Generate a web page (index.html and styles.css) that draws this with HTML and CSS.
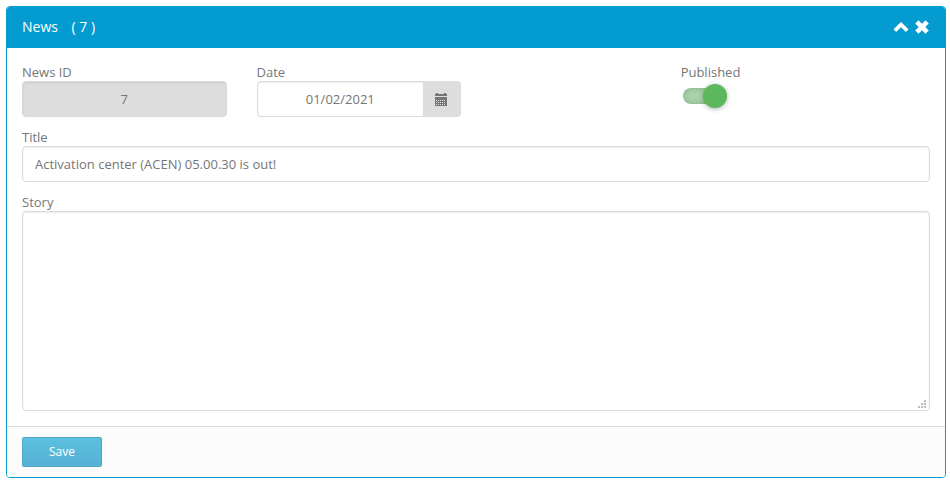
FILE: index.html
```html
<!DOCTYPE html>
<html lang="en">

<head>
    <meta charset="UTF-8">
    <meta name="viewport" content="width=device-width, initial-scale=1.0">
    <title>News</title>
    <link rel="stylesheet" href="styles.css">
</head>

<body>
    <form class="panel">
        <header class="panel-heading">
            <h1 class="panel-title">News <span class="panel-count">( 7 )</span></h1>
            <div class="panel-tools">
                <button type="button" class="tool" aria-label="Collapse">
                    <svg width="16" height="14" viewBox="0 0 16 14"><path d="M8 2 15.5 9.3 12.9 12 8 7.2 3.1 12 0.5 9.3z"/></svg>
                </button>
                <button type="button" class="tool" aria-label="Close">
                    <svg width="14" height="14" viewBox="0 0 14 14"><path d="M3.5 0.2 7 3.7 10.5 0.2 13.8 3.5 10.3 7 13.8 10.5 10.5 13.8 7 10.3 3.5 13.8 0.2 10.5 3.7 7 0.2 3.5z"/></svg>
                </button>
            </div>
        </header>

        <div class="panel-body">
            <div class="row">
                <div class="col-3">
                    <label for="newsId">News ID</label>
                    <input type="text" id="newsId" class="form-control text-center" value="7" disabled>
                </div>
                <div class="col-3">
                    <label for="newsDate">Date</label>
                    <div class="input-group">
                        <input type="text" id="newsDate" class="form-control text-center" value="01/02/2021">
                        <button type="button" class="input-addon" aria-label="Pick a date">
                            <svg width="12" height="13" viewBox="0 0 12 13" shape-rendering="crispEdges">
                                <path d="M1 0h2v1h6V0h2v1h1v2H0V1h1zM0 4h12v9H0z"/>
                                <path class="days" d="M1 7.5h10M1 9.5h10M1 11.5h10"/>
                            </svg>
                        </button>
                    </div>
                </div>
                <div class="col-published">
                    <div class="switch-group">
                        <label for="published">Published</label>
                        <input type="checkbox" id="published" class="switch" checked>
                    </div>
                </div>
            </div>
            <div class="form-group">
                <label for="title">Title</label>
                <input type="text" id="title" class="form-control" value="Activation center (ACEN) 05.00.30 is out!">
            </div>
            <div class="form-group">
                <label for="story">Story</label>
                <textarea id="story" class="form-control story"></textarea>
            </div>
        </div>

        <footer class="panel-footer">
            <button type="submit" class="btn-save">Save</button>
        </footer>
    </form>
</body>

</html>
```
FILE: styles.css
```css
* {
    box-sizing: border-box;
}

body {
    margin: 0;
    padding: 6px 4px 5px 6px;
    background: #fff;
    color: #767676;
    font-family: 'Open Sans', sans-serif;
    font-size: 13px;
    line-height: 18px;
}

button,
input,
textarea {
    margin: 0;
    font: inherit;
    color: inherit;
}

button {
    cursor: pointer;
}

/* Panel */
.panel {
    border: 1px solid #049bd1;
    border-radius: 4px;
    overflow: hidden;
}

.panel-heading {
    display: flex;
    justify-content: space-between;
    align-items: center;
    padding: 10px 16px 11px 15px;
    background: #049bd1;
    color: #fff;
}

.panel-title {
    margin: 0;
    font-size: 14px;
    font-weight: 400;
    line-height: 20px;
}

.panel-count {
    margin-left: 10px;
}

.panel-tools {
    display: flex;
    gap: 6px;
}

.tool {
    display: flex;
    padding: 0;
    border: 0;
    background: none;
    color: #fff;
}

svg {
    display: block;
    fill: currentColor;
}

.panel-body {
    display: flex;
    flex-direction: column;
    gap: 11px;
    padding: 15px;
}

.panel-footer {
    padding: 10px 15px;
    border-top: 1px solid #ddd;
    background: #fcfcfc;
}

/* Form */
.row {
    display: grid;
    grid-template-columns: repeat(12, minmax(0, 1fr));
    margin: 0 -15px;
}

.col-3 {
    grid-column: span 3;
    padding: 0 15px;
}

.col-published {
    grid-column: 9 / span 2;
    display: flex;
    justify-content: center;
}

label {
    display: block;
}

.form-control {
    display: block;
    width: 100%;
    height: 36px;
    padding: 6px 12px;
    border: 1px solid #dadada;
    border-radius: 4px;
    background: #fff;
    box-shadow: inset 0 1px 2px rgba(0, 0, 0, 0.08);
}

.form-control:disabled {
    background: #ddd;
}

.text-center {
    text-align: center;
}

.input-group {
    display: flex;
}

.input-group .form-control {
    flex: 1;
    min-width: 0;
    border-right: 0;
    border-radius: 4px 0 0 4px;
}

.input-addon {
    display: flex;
    align-items: center;
    padding: 0 14px 0 12px;
    border: 0;
    border-radius: 0 4px 4px 0;
    background: #ddd;
}

.days {
    fill: none;
    stroke: #ddd;
    stroke-dasharray: 1 1;
}

.story {
    height: 200px;
    resize: vertical;
}

.story::-webkit-resizer {
    background:
        linear-gradient(#bbb, #bbb) right 3px bottom 2px / 2px 2px,
        linear-gradient(#bbb, #bbb) right 6px bottom 2px / 2px 2px,
        linear-gradient(#bbb, #bbb) right 9px bottom 2px / 2px 2px,
        linear-gradient(#bbb, #bbb) right 3px bottom 5px / 2px 2px,
        linear-gradient(#bbb, #bbb) right 6px bottom 5px / 2px 2px,
        linear-gradient(#bbb, #bbb) right 3px bottom 8px / 2px 2px;
    background-repeat: no-repeat;
}

/* Published switch */
.switch {
    appearance: none;
    display: flex;
    align-items: center;
    justify-content: flex-end;
    width: 44px;
    height: 16px;
    margin: 7px 2px;
    border-radius: 8px;
    background: #a9d3aa;
    box-shadow: inset 0 0 6px rgba(0, 0, 0, 0.2);
    cursor: pointer;
}

.switch::before {
    content: '';
    flex: none;
    width: 24px;
    height: 24px;
    border-radius: 50%;
    background: #5cb85c;
    box-shadow: 0 1px 5px rgba(0, 0, 0, 0.3);
}

.switch:not(:checked) {
    justify-content: flex-start;
    background: #ccc;
}

.btn-save {
    display: block;
    width: 80px;
    height: 30px;
    padding: 0;
    border: 1px solid #4fa5c2;
    border-radius: 2px;
    background: linear-gradient(#5bc0de, #57b2d5);
    color: #fff;
    font-size: 12px;
}
```
